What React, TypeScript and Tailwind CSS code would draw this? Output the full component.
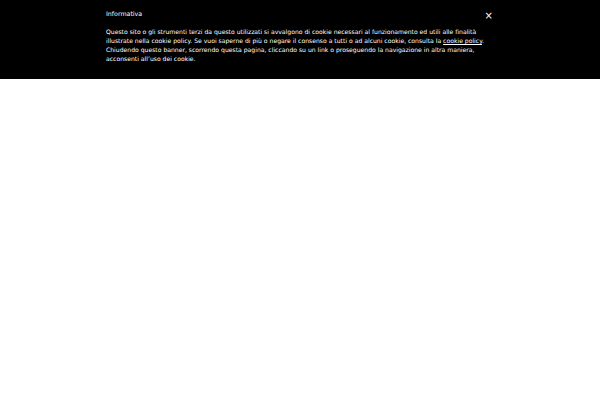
import React from "react";

export default function App() {
  return (
    <div className="w-[600px] h-[400px] bg-white" style={{ fontFamily: '"DejaVu Sans", sans-serif' }}>
      <div className="bg-black text-white h-[79px]">
        <div className="relative w-[388px] mx-auto pt-[9px] text-[6.1px] leading-[9px]">
          <div className="mb-[9px] text-[6.3px]">Informativa</div>
          <p>
            Questo sito o gli strumenti terzi da questo utilizzati si avvalgono di cookie necessari al funzionamento ed utili alle finalità illustrate nella cookie policy. Se vuoi saperne di più o negare il consenso a tutti o ad alcuni cookie, consulta la <a className="underline">cookie policy</a>. Chiudendo questo banner, scorrendo questa pagina, cliccando su un link o proseguendo la navigazione in altra maniera, acconsenti all’uso dei cookie.
          </p>
          <button className="absolute right-[1px] top-[11px] text-[10px] leading-[10px]">×</button>
        </div>
      </div>
    </div>
  );
}
